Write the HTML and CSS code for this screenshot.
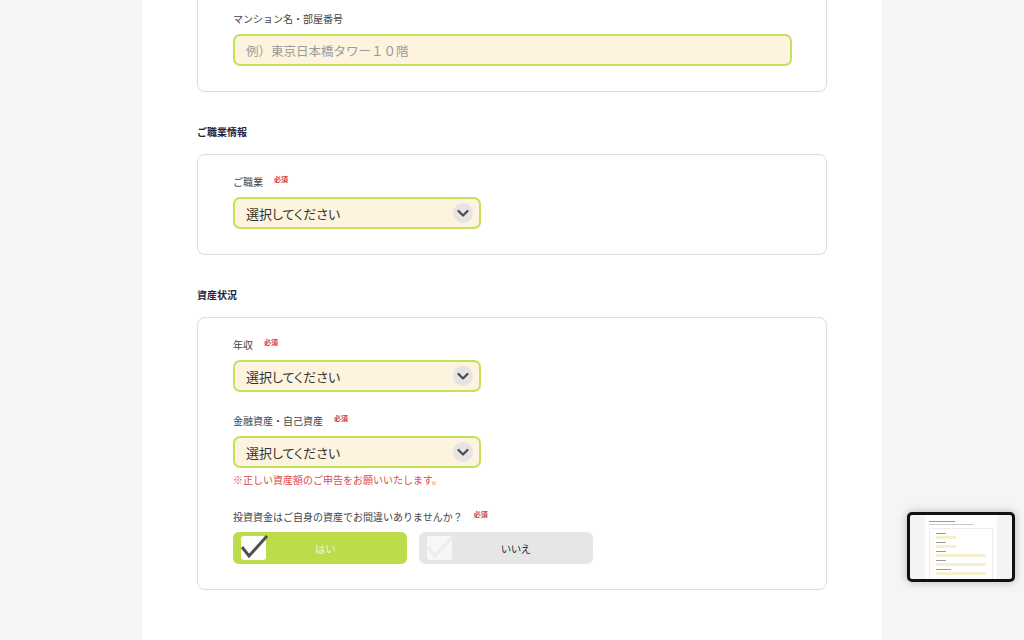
FILE: index.html
```html
<!DOCTYPE html>
<html lang="ja">
<head>
    <meta charset="UTF-8">
    <meta name="viewport" content="width=device-width, initial-scale=1.0">
    <title>お客様情報</title>
    <link rel="stylesheet" href="styles.css">
</head>
<body>
    <div class="page">
        <!-- 住所の続き -->
        <div class="card card-cont">
            <div class="field">
                <label class="label">マンション名・部屋番号</label>
                <input type="text" class="input" placeholder="例）東京日本橋タワー１０階">
            </div>
        </div>

        <h2 class="heading">ご職業情報</h2>
        <div class="card">
            <div class="field">
                <label class="label">ご職業<span class="req">必須</span></label>
                <div class="select">
                    <span>選択してください</span>
                    <span class="chev"><svg width="20" height="20" viewBox="0 0 20 20"><path d="M5.5 8 L10 12.5 L14.5 8" fill="none" stroke="#4a4a4a" stroke-width="2.2" stroke-linecap="round" stroke-linejoin="round"/></svg></span>
                </div>
            </div>
        </div>

        <h2 class="heading">資産状況</h2>
        <div class="card">
            <div class="field">
                <label class="label">年収<span class="req">必須</span></label>
                <div class="select">
                    <span>選択してください</span>
                    <span class="chev"><svg width="20" height="20" viewBox="0 0 20 20"><path d="M5.5 8 L10 12.5 L14.5 8" fill="none" stroke="#4a4a4a" stroke-width="2.2" stroke-linecap="round" stroke-linejoin="round"/></svg></span>
                </div>
            </div>
            <div class="field">
                <label class="label">金融資産・自己資産<span class="req">必須</span></label>
                <div class="select">
                    <span>選択してください</span>
                    <span class="chev"><svg width="20" height="20" viewBox="0 0 20 20"><path d="M5.5 8 L10 12.5 L14.5 8" fill="none" stroke="#4a4a4a" stroke-width="2.2" stroke-linecap="round" stroke-linejoin="round"/></svg></span>
                </div>
                <p class="note">※正しい資産額のご申告をお願いいたします。</p>
            </div>
            <div class="field">
                <label class="label">投資資金はご自身の資産でお間違いありませんか？<span class="req">必須</span></label>
                <div class="choices">
                    <div class="choice on">
                        <span class="box"><svg width="30" height="28" viewBox="0 0 30 28"><path d="M2 13 L9 22 L27 2" fill="none" stroke="#505050" stroke-width="3"/></svg></span>
                        <span class="text">はい</span>
                    </div>
                    <div class="choice">
                        <span class="box"><svg width="30" height="28" viewBox="0 0 30 28"><path d="M2 13 L9 22 L27 2" fill="none" stroke="#ececec" stroke-width="3"/></svg></span>
                        <span class="text">いいえ</span>
                    </div>
                </div>
            </div>
        </div>
    </div>

    <!-- 右下のプレビュー -->
    <div class="preview">
        <div class="mini">
            <div class="mini-line w40"></div>
            <div class="mini-line w70 dim"></div>
            <div class="mini-card">
                <div class="mini-line w20"></div>
                <div class="mini-bar short"></div>
                <div class="mini-line w20"></div>
                <div class="mini-bar short"></div>
                <div class="mini-line w20"></div>
                <div class="mini-bar"></div>
                <div class="mini-line w20"></div>
                <div class="mini-bar"></div>
                <div class="mini-line w30"></div>
                <div class="mini-bar"></div>
            </div>
            <div class="mini-line w15"></div>
            <div class="mini-card">
                <div class="mini-line w15"></div>
                <div class="mini-bar short"></div>
            </div>
        </div>
    </div>
</body>
</html>
```

FILE: styles.css
```css
body {
    margin: 0;
    background: #f5f5f5;
    font-family: 'Noto Sans CJK JP', 'Noto Sans', sans-serif;
    color: #333;
    height: 640px;
    overflow: hidden;
}
.page {
    width: 630px;
    margin: 0 auto;
    padding: 0 55px 40px;
    background: #fff;
    min-height: 640px;
}
.card {
    border: 1px solid #dcdcdc;
    border-radius: 8px;
    padding: 19px 35px 25px;
}
.card-cont {
    border-top: 0;
    border-radius: 0 0 8px 8px;
    padding-top: 11px;
}
.heading {
    margin: 32px 0 14px;
    font-size: 10px;
    line-height: 16px;
    font-weight: bold;
    color: #1f2540;
}
.field + .field {
    margin-top: 21px;
}
.label {
    display: block;
    height: 16px;
    font-size: 10px;
    line-height: 16px;
    color: #444;
    margin-bottom: 7px;
}
.req {
    font-size: 7px;
    line-height: 1;
    color: #d23a3a;
    font-weight: bold;
    margin-left: 11px;
    position: relative;
    top: -4px;
}
.input, .select {
    box-sizing: border-box;
    height: 32px;
    border: 2px solid #c4e15a;
    border-radius: 7px;
    background: #fdf3df;
    font-family: inherit;
}
.input {
    display: block;
    width: 559px;
    padding: 0 11px;
    font-size: 12.5px;
    color: #333;
    outline: none;
}
.input::placeholder {
    color: #9a9a9a;
}
.select {
    width: 248px;
    display: flex;
    align-items: center;
    justify-content: space-between;
    padding: 0 6px 0 11px;
    font-size: 13px;
    font-feature-settings: "palt";
    color: #333;
}
.chev {
    width: 20px;
    height: 20px;
    border-radius: 50%;
    background: #e4e4e4;
    display: flex;
}
.note {
    margin: 4px 0 0;
    font-size: 10px;
    line-height: 16px;
    color: #e04b4b;
}
.choices {
    display: flex;
    gap: 12px;
}
.choice {
    width: 174px;
    height: 32px;
    border-radius: 6px;
    background: #e6e6e6;
    display: flex;
    align-items: center;
}
.choice.on {
    background: #bcdc4c;
}
.box {
    width: 25px;
    height: 24px;
    margin-left: 8px;
    background: #fff;
    border-radius: 3px;
    position: relative;
}
.box svg {
    position: absolute;
    left: -1px;
    top: -2px;
}
.choice:not(.on) .box {
    background: #f7f7f7;
}
.choice .text {
    margin-left: 49px;
    font-size: 10.5px;
    font-feature-settings: "palt";
    color: #333;
}
.choice.on .text {
    color: #f3f7e0;
}
.preview {
    position: fixed;
    left: 907px;
    top: 512px;
    width: 102px;
    height: 64px;
    border: 3px solid #111;
    border-radius: 5px;
    background: #f4f4f4;
    box-shadow: 0 0 8px rgba(0, 0, 0, 0.25);
    overflow: hidden;
}
.mini {
    width: 72px;
    height: 100%;
    margin: 0 auto;
    background: #fff;
    padding: 4px 4px 0;
    box-sizing: border-box;
}
.mini-line {
    height: 1px;
    background: #999;
    margin: 2px 0;
}
.mini-line.dim {
    background: #ccc;
}
.mini-card {
    border: 1px solid #eee;
    padding: 2px 6px;
    margin: 3px 0;
}
.mini-bar {
    height: 3px;
    background: #f6efcf;
    margin: 1px 0 3px;
}
.mini-bar.short {
    width: 40%;
}
.w15 { width: 15%; }
.w20 { width: 20%; }
.w30 { width: 30%; }
.w40 { width: 40%; }
.w70 { width: 70%; }
```
